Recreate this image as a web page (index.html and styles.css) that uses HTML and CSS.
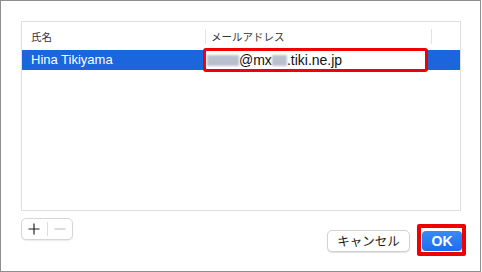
FILE: index.html
```html
<!DOCTYPE html>
<html>
<head>
<meta charset="utf-8">
<link rel="stylesheet" href="styles.css">
</head>
<body>
<div class="frame">
  <div class="table">
    <div class="thead">
      <div class="th col-name">氏名</div>
      <div class="th col-mail">メールアドレス</div>
      <div class="th col-rest"></div>
    </div>
    <div class="row selected">
      <div class="td col-name">Hina Tikiyama</div>
      <div class="td col-mail">
        <div class="edit">
          <span class="blur b1"></span><span>@mx</span><span class="blur b2"></span><span>.tiki.ne.jp</span>
        </div>
      </div>
      <div class="td col-rest"></div>
    </div>
  </div>
  <div class="footer">
    <div class="segment">
      <span class="seg-btn">
        <svg width="12" height="12" viewBox="0 0 12 12"><path d="M6 0.5V11.5M0.5 6H11.5" stroke="#222" stroke-width="1.2"/></svg>
      </span>
      <span class="seg-div"></span>
      <span class="seg-btn">
        <svg width="12" height="12" viewBox="0 0 12 12"><path d="M0.5 6H11.5" stroke="#c4c4c4" stroke-width="1.2"/></svg>
      </span>
    </div>
    <div class="actions">
      <button class="btn cancel">キャンセル</button>
      <span class="ok-wrap"><button class="btn ok">OK</button></span>
    </div>
  </div>
</div>
</body>
</html>
```
FILE: styles.css
```css
html, body {
  margin: 0;
  padding: 0;
  background: #ffffff;
}
body {
  font-family: "Liberation Sans", "Noto Sans CJK JP", sans-serif;
}
.frame {
  box-sizing: border-box;
  width: 481px;
  height: 272px;
  border: 1px solid #8f8f8f;
  padding: 20px 19px 0 20px;
  background: #ffffff;
}
.table {
  box-sizing: border-box;
  width: 440px;
  height: 190px;
  border: 1px solid #dedede;
}
.thead {
  display: flex;
  height: 28px;
  align-items: center;
}
.th {
  box-sizing: border-box;
  height: 15px;
  line-height: 15px;
  font-family: "Noto Sans CJK JP", "Liberation Sans", sans-serif;
  font-size: 10.5px;
  color: #333333;
}
.col-name {
  width: 183px;
  padding-left: 9px;
}
.col-mail {
  width: 226px;
  padding-left: 5px;
}
.col-rest {
  flex: 1;
}
.th.col-mail, .th.col-rest {
  border-left: 1px solid #e2e2e2;
}
.row {
  display: flex;
  height: 20px;
}
.row.selected {
  background: #1b65dd;
}
.td {
  box-sizing: border-box;
  line-height: 20px;
  font-size: 13px;
  color: #ffffff;
}
.td.col-mail {
  width: 227px;
  position: relative;
}
.edit {
  position: absolute;
  left: -2px;
  top: -2px;
  box-sizing: border-box;
  width: 225px;
  height: 24px;
  border: 3px solid #f00000;
  border-radius: 3px;
  background: #ffffff;
  color: #111111;
  font-size: 14px;
  line-height: 18px;
  padding-left: 1px;
  display: flex;
  align-items: center;
  white-space: nowrap;
}
.blur {
  display: inline-block;
  height: 11px;
  background: #b9c0cd;
  filter: blur(1.2px);
}
.b1 { width: 32px; }
.b2 { width: 15px; }
.footer {
  display: flex;
  justify-content: space-between;
  align-items: flex-start;
  padding-top: 7px;
}
.segment {
  box-sizing: border-box;
  width: 52px;
  height: 22px;
  border: 1px solid #d6d6d6;
  border-radius: 5px;
  box-shadow: 0 1px 1px rgba(0,0,0,0.08);
  display: flex;
  align-items: center;
  background: #ffffff;
}
.seg-btn {
  width: 25px;
  height: 20px;
  display: flex;
  align-items: center;
  justify-content: center;
}
.seg-div {
  width: 1px;
  height: 14px;
  background: #dddddd;
}
.actions {
  display: flex;
  align-items: center;
  gap: 12px;
  margin-top: 12px;
  margin-right: -1px;
}
.btn {
  font-family: "Noto Sans CJK JP", "Liberation Sans", sans-serif;
  font-size: 12.5px;
  margin: 0;
  padding: 0;
  box-sizing: border-box;
  border-radius: 5px;
}
.cancel {
  width: 83px;
  height: 22px;
  line-height: 20px;
  background: #ffffff;
  border: 1px solid #d2d2d2;
  box-shadow: 0 1px 1px rgba(0,0,0,0.12);
  color: #1a1a1a;
}
.ok-wrap {
  position: relative;
  display: inline-block;
}
.ok-wrap::after {
  content: "";
  position: absolute;
  left: -5px;
  right: -4px;
  top: -7px;
  bottom: -5px;
  border: 4px solid #f00000;
  border-radius: 2px;
}
.ok {
  display: block;
  width: 40px;
  height: 20px;
  line-height: 20px;
  border: none;
  border-radius: 4px;
  background: linear-gradient(#3a8af7, #1a6ef0);
  color: #ffffff;
  font-family: "Liberation Sans", sans-serif;
  font-weight: bold;
  font-size: 14px;
}
```
